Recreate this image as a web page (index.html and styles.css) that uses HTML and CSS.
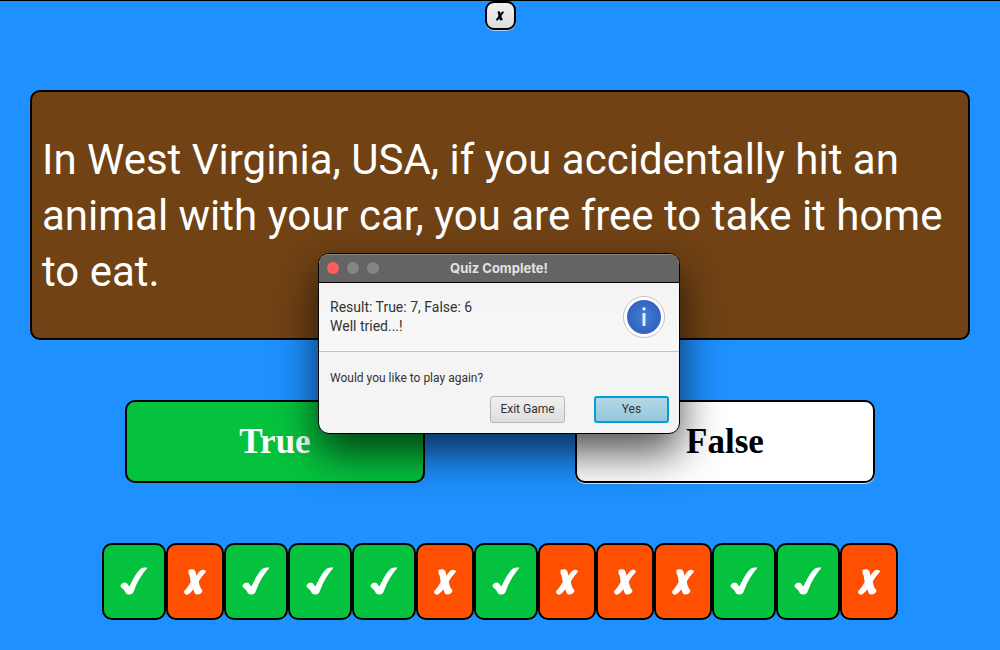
FILE: index.html
```html
<!DOCTYPE html>
<html lang="en">
<head>
<meta charset="utf-8">
<title>Quiz</title>
<link rel="stylesheet" href="styles.css">
</head>
<body>
<svg class="defs" width="0" height="0" aria-hidden="true">
  <symbol id="check" viewBox="0 0 28 30"><path d="M.5 19.500C1 17.300 4.500 15.500 6.500 17C7.800 18 8.500 20 9.600 20.300C13 12.500 17.500 5 21 2.500C23 1.400 25.500 1.500 27.500 1.800C22 8 17 16 14 24.800C13 27.500 12 28.500 9.500 28.500C6.500 28.800 6 27.500 4.700 25C3.500 22.500 .5 22 .5 19.500Z"/></symbol>
  <symbol id="cross" viewBox="0 0 22 26"><path d="M4.500 1C7 -.2 10.300 -.2 11.300 2.200L12.600 6.800C14.300 3.800 16 1.300 18.500 .8C20.300 .4 21.900 1.400 22 2.800C19.500 5.500 16.800 8.800 14.800 12.500C15.300 16 16 18.800 18.600 21.500C18 24.500 15.400 25.800 12.800 25.600C10.500 25 10 22.500 9.400 20.200C7.700 22 6 24.500 4 25.600C2 26.300 0 24.500 0 22.200C2.500 20 5 16.500 6.700 13C6 9.500 6.300 6.500 4.500 4.500Z"/></symbol>
</svg>
<main class="quiz">
  <button class="close" type="button" aria-label="Close"><svg class="close-icon"><use href="#cross"/></svg></button>
  <section class="question"><p class="question-text">In West Virginia, USA, if you accidentally hit an animal with your car, you are free to take it home to eat.</p></section>
  <div class="answers">
    <button class="answer answer-true" type="button">True</button>
    <button class="answer answer-false" type="button">False</button>
  </div>
  <div class="results">
    <span class="mark right"><svg><use href="#check"/></svg></span>
    <span class="mark wrong"><svg><use href="#cross"/></svg></span>
    <span class="mark right"><svg><use href="#check"/></svg></span>
    <span class="mark right"><svg><use href="#check"/></svg></span>
    <span class="mark right"><svg><use href="#check"/></svg></span>
    <span class="mark wrong"><svg><use href="#cross"/></svg></span>
    <span class="mark right"><svg><use href="#check"/></svg></span>
    <span class="mark wrong"><svg><use href="#cross"/></svg></span>
    <span class="mark wrong"><svg><use href="#cross"/></svg></span>
    <span class="mark wrong"><svg><use href="#cross"/></svg></span>
    <span class="mark right"><svg><use href="#check"/></svg></span>
    <span class="mark right"><svg><use href="#check"/></svg></span>
    <span class="mark wrong"><svg><use href="#cross"/></svg></span>
  </div>
</main>
<div class="overlay">
  <section class="dialog" role="dialog" aria-labelledby="dialog-title">
    <header class="titlebar">
      <div class="lights">
        <button class="light light-close" type="button" aria-label="Close dialog"></button>
        <button class="light" type="button" aria-label="Minimize" disabled></button>
        <button class="light" type="button" aria-label="Zoom" disabled></button>
      </div>
      <h1 class="title" id="dialog-title">Quiz Complete!</h1>
    </header>
    <div class="summary">
      <p class="summary-text">Result: True: 7, False: 6<br>Well tried...!</p>
      <svg class="info" viewBox="0 0 42 42" aria-hidden="true">
        <defs><radialGradient id="blue"><stop offset="0" stop-color="#4480d2"/><stop offset="1" stop-color="#3262c2"/></radialGradient></defs>
        <circle cx="21" cy="21" r="20.500" fill="#fff" stroke="#c6c3bf"/>
        <circle cx="21" cy="21" r="17" fill="url(#blue)"/>
        <circle cx="21" cy="12.800" r="1.600" fill="#fff"/>
        <path d="M19.500 17H22.500V30H19.500Z" fill="#e4eefb"/>
      </svg>
    </div>
    <div class="prompt">
      <p class="prompt-text">Would you like to play again?</p>
      <div class="actions">
        <button class="action" type="button">Exit Game</button>
        <button class="action action-default" type="button">Yes</button>
      </div>
    </div>
  </section>
</div>
</body>
</html>
```
FILE: styles.css
```css
* { box-sizing: border-box; }
body {
  margin: 0;
  background: #1e90ff;
  font-family: Roboto, "Liberation Sans", sans-serif;
}
p, h1 { margin: 0; }
button { padding: 0; font-family: inherit; }
.defs { position: absolute; }
.quiz {
  min-height: 100vh;
  border-top: 1px solid #000;
  padding: 0 30px 30px;
  display: flex;
  flex-direction: column;
  align-items: center;
  gap: 60px;
}
.close {
  width: 31px;
  height: 29px;
  border: 2px solid #000;
  border-radius: 9px;
  background: linear-gradient(#f2f2f2, #dcdcdc);
  box-shadow: 0 1px #a9cdf5;
  display: flex;
  align-items: center;
  justify-content: center;
}
.close-icon { width: 8px; height: 10px; }
.close-icon { overflow: visible; }
.question {
  flex: 1;
  align-self: stretch;
  border: 2px solid #000;
  border-radius: 10px;
  background: #704214;
  padding: 11px 10px 9px;
  display: flex;
  align-items: center;
}
.question-text { color: #fff; font-size: 42px; line-height: 56px; }
.answers { display: flex; justify-content: center; gap: 150px; align-self: stretch; }
.answer {
  flex: 0 1 300px;
  height: 83px;
  border: 2px solid #000;
  border-radius: 10px;
  font: bold 35px "Liberation Serif", serif;
}
.answer-true { background: #05c23e; color: #fff; }
.answer-false { background: #fff; color: #000; box-shadow: 0 1px #d2e8ff; }
.results { display: flex; justify-content: center; }
.mark {
  height: 77px;
  border: 2px solid #000;
  border-radius: 10px;
  display: flex;
  align-items: center;
  justify-content: center;
  fill: #fff;
}
.right { width: 64px; background: #05c23e; }
.wrong { width: 58px; background: #ff4f00; }
.right svg { width: 28px; height: 30px; margin-bottom: 2px; }
.wrong svg { width: 22px; height: 26px; }
.overlay {
  position: absolute;
  inset: 0;
  padding: 72px 2px 36px 0;
  display: flex;
  align-items: center;
  justify-content: center;
}
.dialog {
  width: 362px;
  border: 1px solid #000;
  border-radius: 11px;
  background: #f4f4f4;
  color: #333;
  overflow: hidden;
  box-shadow: 0 19px 42px rgba(0, 0, 0, .68);
}
.titlebar {
  height: 29px;
  padding: 0 8px;
  border-bottom: 1px solid #000;
  background: #646464;
  box-shadow: inset 0 1px #858585;
  display: grid;
  grid-template-columns: 1fr auto 1fr;
  align-items: center;
}
.lights { display: flex; gap: 8px; }
.light { width: 12px; height: 12px; border: 0; border-radius: 50%; background: #858585; }
.light-close { background: #ff5f5c; }
.title { color: #e2e2e2; font-family: Inter, sans-serif; font-size: 13px; line-height: 18px; font-weight: 700; }
.summary {
  height: 69px;
  padding: 1px 14px 0 11px;
  border-bottom: 1px solid #c4c4c4;
  background: linear-gradient(#f4f4f4, #f8f8f8);
  display: flex;
  align-items: center;
  justify-content: space-between;
}
.summary-text { font-size: 14px; line-height: 19px; }
.info { width: 42px; height: 42px; }
.prompt { padding: 17px 10px 10px 11px; }
.prompt-text { font-size: 12px; line-height: 18px; }
.actions { padding-top: 9px; display: flex; justify-content: flex-end; gap: 29px; }
.action {
  width: 75px;
  height: 27px;
  border: 1px solid #b5b5b5;
  border-radius: 3px;
  background: linear-gradient(#f0f0f0, #dedede);
  color: #333;
  font-size: 12px;
}
.action-default {
  border: 2px solid #039ed3;
  background: linear-gradient(#b4d7e5, #95c7dc);
}
```
